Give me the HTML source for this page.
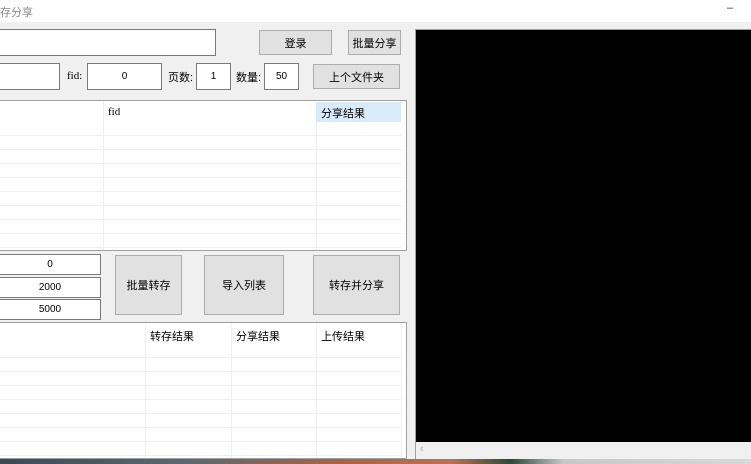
<!DOCTYPE html><html><head><meta charset="utf-8"><style>
body{margin:0;width:751px;height:464px;overflow:hidden;background:#f0f0f0;position:relative;font-family:"Liberation Sans","Noto Sans CJK SC",sans-serif;font-size:11px;color:#000}
.a{position:absolute;box-sizing:border-box}
.tb{background:#fff;border:1px solid #7a7a7a;text-align:center;font-size:10px}
.bt{background:#e1e1e1;border:1px solid #adadad;text-align:center;display:flex;align-items:center;justify-content:center}
.rows{background-image:repeating-linear-gradient(to bottom,transparent 0,transparent 13px,#f0f0f0 13px,#f0f0f0 14px)}
</style></head><body>
<div class="a" style="left:0;top:0;width:751px;height:22px;background:#fff"></div>
<div class="a" style="left:0;top:4px;color:#888;font-size:11px">存分享</div>
<div class="a" style="left:727px;top:2px;color:#333">–</div>
<div class="a tb" style="left:-1px;top:29px;width:217px;height:27px"></div>
<div class="a bt" style="left:259px;top:30px;width:73px;height:25px">登录</div>
<div class="a bt" style="left:348px;top:30px;width:53px;height:25px">批量分享</div>
<div class="a tb" style="left:-1px;top:63px;width:61px;height:27px"></div>
<div class="a" style="left:67px;top:70px;font-family:'Liberation Serif',serif;font-size:11px">fid:</div>
<div class="a tb" style="left:87px;top:63px;width:75px;height:27px;line-height:25px">0</div>
<div class="a" style="left:168px;top:69px">页数:</div>
<div class="a tb" style="left:196px;top:63px;width:35px;height:27px;line-height:25px">1</div>
<div class="a" style="left:236px;top:69px">数量:</div>
<div class="a tb" style="left:264px;top:63px;width:35px;height:27px;line-height:25px">50</div>
<div class="a bt" style="left:313px;top:64px;width:87px;height:25px">上个文件夹</div>
<div class="a" style="left:-1px;top:100px;width:408px;height:151px;background:#fff;border:1px solid #a0a0a0">
 <div class="a rows" style="left:0;top:21px;width:402px;height:128px"></div>
 <div class="a" style="left:103px;top:0;width:1px;height:149px;background:#f0f0f0"></div>
 <div class="a" style="left:316px;top:0;width:1px;height:149px;background:#f0f0f0"></div>
 <div class="a" style="left:316px;top:1px;width:85px;height:20px;background:#d9ebf9"></div>
 <div class="a" style="left:108px;top:5px;font-family:'Liberation Serif',serif;font-size:11px">fid</div>
 <div class="a" style="left:321px;top:4px">分享结果</div>
</div>
<div class="a tb" style="left:-1px;top:254px;width:102px;height:21px;line-height:19px">0</div>
<div class="a tb" style="left:-1px;top:277px;width:102px;height:21px;line-height:19px">2000</div>
<div class="a tb" style="left:-1px;top:299px;width:102px;height:21px;line-height:19px">5000</div>
<div class="a bt" style="left:115px;top:255px;width:67px;height:60px">批量转存</div>
<div class="a bt" style="left:204px;top:255px;width:80px;height:60px">导入列表</div>
<div class="a bt" style="left:313px;top:255px;width:87px;height:60px">转存并分享</div>
<div class="a" style="left:-1px;top:322px;width:408px;height:137px;background:#fff;border:1px solid #a0a0a0">
 <div class="a rows" style="left:0;top:21px;width:402px;height:114px"></div>
 <div class="a" style="left:145px;top:0;width:1px;height:135px;background:#f0f0f0"></div>
 <div class="a" style="left:231px;top:0;width:1px;height:135px;background:#f0f0f0"></div>
 <div class="a" style="left:316px;top:0;width:1px;height:135px;background:#f0f0f0"></div>
 <div class="a" style="left:401px;top:0;width:1px;height:135px;background:#f0f0f0"></div>
 <div class="a" style="left:150px;top:5px">转存结果</div>
 <div class="a" style="left:236px;top:5px">分享结果</div>
 <div class="a" style="left:321px;top:5px">上传结果</div>
</div>
<div class="a" style="left:415px;top:29px;width:336px;height:430px;border-left:1px solid #a0a0a0;border-top:1px solid #a0a0a0;background:#000"></div>
<div class="a" style="left:416px;top:442px;width:335px;height:17px;background:#f0f0f0"></div>
<div class="a" style="left:420px;top:443px;color:#aaa;font-size:11px">‹</div>
<div class="a" style="left:0;top:459px;width:751px;height:5px;background:linear-gradient(90deg,#3a4a55 0%,#5a6a70 25%,#b06040 45%,#c07050 60%,#2a4a3a 68%,#c8c8c8 75%,#d8d8d8 100%)"></div>
</body></html>
